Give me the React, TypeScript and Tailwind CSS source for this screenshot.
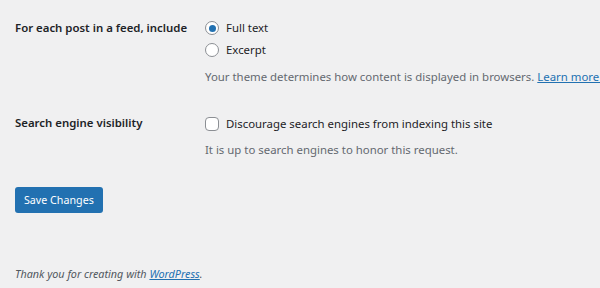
import React from "react";

export default function App() {
  return (
    <div
      className="w-[600px] h-[288px] overflow-hidden bg-[#f0f0f1] text-[#1d2327] text-[11.4px] leading-[18px]"
      style={{ fontFamily: '"Noto Sans", "Open Sans", sans-serif' }}
    >
      <div className="pl-[15px] pt-[18px]">
        {/* Row 1 */}
        <div className="flex">
          <div className="w-[190px] shrink-0 font-semibold pt-[1px] whitespace-nowrap">For each post in a feed, include</div>
          <div className="flex flex-col whitespace-nowrap">
            <label className="flex items-center h-[20px]">
              <span className="w-[14px] h-[14px] rounded-full border border-[#8c8f94] bg-white flex items-center justify-center mr-[7px]">
                <span className="w-[7px] h-[7px] rounded-full bg-[#2271b1]" />
              </span>
              Full text
            </label>
            <label className="flex items-center h-[20px] mt-[2px]">
              <span className="w-[14px] h-[14px] rounded-full border border-[#8c8f94] bg-white mr-[7px]" />
              Excerpt
            </label>
            <p className="mt-[8px] text-[#646970]">
              Your theme determines how content is displayed in browsers.{" "}
              <a className="text-[#2271b1] underline">Learn more about feeds</a>.
            </p>
          </div>
        </div>
        {/* Row 2 */}
        <div className="flex mt-[28px]">
          <div className="w-[190px] shrink-0 font-semibold">Search engine visibility</div>
          <div className="flex flex-col whitespace-nowrap">
            <label className="flex items-center h-[20px]">
              <span className="w-[14px] h-[14px] rounded-[4px] border border-[#8c8f94] bg-white mr-[7px]" />
              Discourage search engines from indexing this site
            </label>
            <p className="mt-[7px] text-[#646970]">It is up to search engines to honor this request.</p>
          </div>
        </div>
        <button className="mt-[28px] h-[26px] px-[9px] rounded-[3px] bg-[#2271b1] text-white text-[10.7px] leading-none">
          Save Changes
        </button>
        <p className="mt-[52px] italic text-[#50575e] text-[10.8px]">
          Thank you for creating with <a className="text-[#2271b1] underline">WordPress</a>.
        </p>
      </div>
    </div>
  );
}
